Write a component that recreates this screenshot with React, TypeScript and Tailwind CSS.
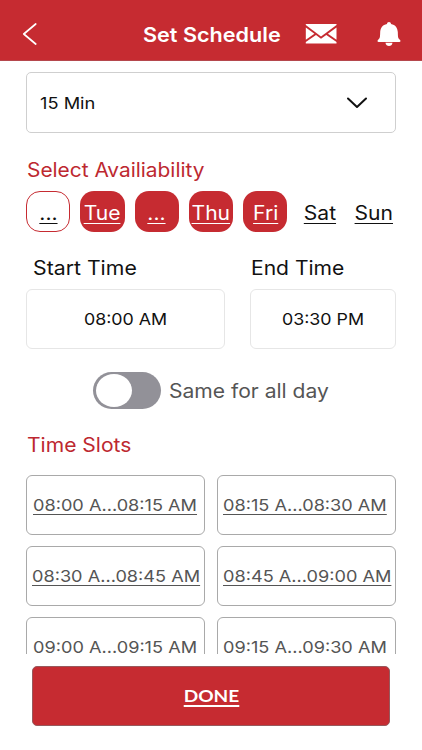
import { useState } from "react";

const days = [
  { name: "...", selected: false, outlined: true },
  { name: "Tue", selected: true, outlined: false },
  { name: "...", selected: true, outlined: false },
  { name: "Thu", selected: true, outlined: false },
  { name: "Fri", selected: true, outlined: false },
  { name: "Sat", selected: false, outlined: false },
  { name: "Sun", selected: false, outlined: false },
];

const slots = [
  { label: "08:00 A...08:15 AM", spacing: "pl-[6px]" },
  { label: "08:15 A...08:30 AM", spacing: "pl-[4.5px]" },
  { label: "08:30 A...08:45 AM", spacing: "pl-[5px]" },
  { label: "08:45 A...09:00 AM", spacing: "pl-[5px]" },
  { label: "09:00 A...09:15 AM", spacing: "pl-[6px]" },
  { label: "09:15 A...09:30 AM", spacing: "pl-[4.5px]" },
];

const Header = () => (
  <header className="h-[61px] shrink-0 bg-[#c62b31] border-b border-[#b5484d] flex items-center pt-2 text-white">
    <button className="ml-[22px] w-4 h-[22px]" aria-label="Back">
      <svg viewBox="0 0 16 22" className="w-4 h-[22px]" fill="none">
        <path d="M13.7 1 L1.8 11 L13.7 21" stroke="currentColor" strokeWidth="1.7" strokeLinecap="round" strokeLinejoin="round" />
      </svg>
    </button>
    <h1 className="ml-[104.5px] w-[162.5px] pt-px text-[20px] font-semibold whitespace-nowrap">
      <span className="inline-block origin-left scale-x-[1.08]">Set Schedule</span>
    </h1>
    <button className="w-8 h-5" aria-label="Messages">
      <svg viewBox="0 0 32 20" className="w-8 h-5" fill="currentColor">
        <path d="M0.8 0 H31.5 V1 L16 12.6 L0.8 1 Z" />
        <path d="M0.8 3.4 L9.4 9.8 L0.8 15.8 Z" />
        <path d="M31.5 3.4 L22.9 9.8 L31.5 15.8 Z" />
        <path d="M0.8 19.5 V18 L11 11.1 L16 14.8 L21.3 11.1 L31.5 18 V19.5 Z" />
      </svg>
    </button>
    <button className="ml-10 w-6 h-[25px]" aria-label="Notifications">
      <svg viewBox="0 0 24 25" className="w-6 h-[25px]" fill="currentColor">
        <path d="M12 0 C13.1 0 13.9 0.7 14 1.9 C18.5 2.6 20.6 6 20.8 10 C21 14.5 20.8 16 22.8 17.7 C24 18.6 23.6 20 22.3 20 H1.7 C0.4 20 0 18.6 1.2 17.7 C3.2 16 3 14.5 3.2 10 C3.4 6 5.5 2.6 10 1.9 C10.1 0.7 10.9 0 12 0 Z" />
        <path d="M8.5 20.8 H15.5 C15.2 23 13.8 24 12 24 C10.2 24 8.8 23 8.5 20.8 Z" />
      </svg>
    </button>
  </header>
);

const App = () => {
  const [sameForAll, setSameForAll] = useState(false);

  return (
    <div className="w-[422px] h-[750px] bg-white flex flex-col overflow-hidden font-['Inter',sans-serif] text-[#111]">
      <Header />

      <main className="h-[593px] shrink-0 overflow-hidden pl-[26px] pr-[26px]">
        <button className="mt-[11px] w-[370px] h-[61px] border border-[#cfcfcf] rounded-[5px] flex items-center justify-between pl-[13px] pr-[28px]">
          <span className="text-[16px] whitespace-nowrap origin-left scale-x-[1.14]">15 Min</span>
          <svg viewBox="0 0 20 12" className="w-5 h-3" fill="none">
            <path d="M1 1.5 L10 10 L19 1.5" stroke="#111" strokeWidth="2" strokeLinecap="round" strokeLinejoin="round" />
          </svg>
        </button>

        <h2 className="mt-[23px] h-[28px] leading-[28px] pl-px text-[19.5px] text-[#bd2830] whitespace-nowrap">
          <span className="inline-block origin-left scale-x-[1.07]">Select Availiability</span>
        </h2>

        <div className="mt-[7px] flex gap-[10px]">
          {days.map((day, i) => (
            <button
              key={i}
              className={`w-[44.3px] h-[41px] pt-[4px] shrink-0 rounded-[14px] flex items-center justify-center text-[19.5px] whitespace-nowrap ${
                day.selected ? "bg-[#c62b31] text-white" : ""
              } ${day.outlined ? "border border-[#c62b31]" : ""}`}
            >
              <span className="underline decoration-1 underline-offset-[3px] scale-x-[1.08]">{day.name}</span>
            </button>
          ))}
        </div>

        <div className="mt-[22px] flex h-[28px] leading-[28px] text-[19.5px] whitespace-nowrap">
          <div className="w-[225px] pl-[6.5px]">
            <span className="inline-block origin-left scale-x-[1.09]">Start Time</span>
          </div>
          <div>
            <span className="inline-block origin-left scale-x-[1.08]">End Time</span>
          </div>
        </div>
        <div className="mt-[7px] flex gap-[25px] text-[16.5px]">
          <div className="w-[199px] h-[60px] border border-[#e6e6e6] rounded-[6px] flex items-center justify-center">
            <span className="scale-x-[1.08]">08:00 AM</span>
          </div>
          <div className="w-[146px] h-[60px] border border-[#e6e6e6] rounded-[6px] flex items-center justify-center">
            <span className="scale-x-[1.08]">03:30 PM</span>
          </div>
        </div>

        <div className="mt-[23px] ml-[67px] flex items-center">
          <button
            role="switch"
            aria-checked={sameForAll}
            onClick={() => setSameForAll(!sameForAll)}
            className={`w-[68px] h-[37px] rounded-full bg-[#929198] flex items-center px-[3px] ${sameForAll ? "justify-end" : ""}`}
          >
            <span className="w-[36px] h-[33px] rounded-[50%] bg-white" />
          </button>
          <span className="ml-[8px] pt-[2px] text-[19.5px] text-[#555] whitespace-nowrap origin-left scale-x-[1.08]">Same for all day</span>
        </div>

        <h2 className="mt-[22px] h-[28px] leading-[28px] pl-px text-[19.5px] text-[#bd2830]">
          <span className="inline-block origin-left scale-x-[1.08]">Time Slots</span>
        </h2>

        <div className="mt-[16px] grid grid-cols-[179px_179px] gap-x-[12px] gap-y-[11px]">
          {slots.map((slot) => (
            <button
              key={slot.label}
              className={`h-[60px] border border-[#a9a9a9] rounded-[6px] flex items-center text-[16.5px] text-[#555] whitespace-nowrap ${slot.spacing}`}
            >
              <span className="underline decoration-1 underline-offset-[3px] origin-left scale-x-[1.1]">{slot.label}</span>
            </button>
          ))}
        </div>
      </main>

      <footer className="pt-[12px] pl-[32px]">
        <button className="w-[358px] h-[60px] bg-[#c62b31] border border-[#97595c] rounded-[5px] text-white text-[17.5px] font-bold font-['Lato',sans-serif]">
          <span className="inline-block underline decoration-[1.5px] underline-offset-[3px] scale-x-[1.09]">DONE</span>
        </button>
      </footer>
    </div>
  );
};

export default App;
